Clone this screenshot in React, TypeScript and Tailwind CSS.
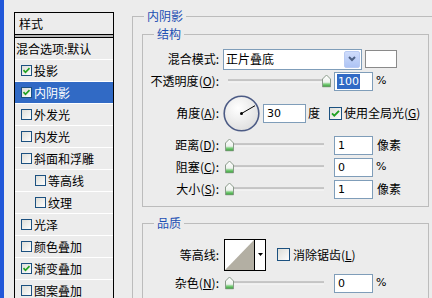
import React from "react";

const CJK = "font-[family-name:'Noto_Sans_CJK_SC','Noto_Sans',sans-serif]";

function SmallCheck({ checked }: { checked?: boolean }) {
  return (
    <svg width="11" height="11" viewBox="0 0 11 11" className="shrink-0 block">
      <defs>
        <linearGradient id="cbs" x1="0" y1="0" x2="1" y2="1">
          <stop offset="0" stopColor="#dcdcd6" />
          <stop offset="1" stopColor="#ffffff" />
        </linearGradient>
      </defs>
      <rect x="0.5" y="0.5" width="10" height="10" fill="url(#cbs)" stroke="#1c5180" />
      {checked && <path d="M2.5 5.2 L4.5 7.3 L8.5 3.2" stroke="#21a121" strokeWidth="1.7" fill="none" />}
    </svg>
  );
}

function BigCheck({ checked }: { checked?: boolean }) {
  return (
    <svg width="13" height="13" viewBox="0 0 13 13" className="shrink-0 block">
      <defs>
        <linearGradient id="cbb" x1="0" y1="0" x2="1" y2="1">
          <stop offset="0" stopColor="#dcdcd6" />
          <stop offset="1" stopColor="#ffffff" />
        </linearGradient>
      </defs>
      <rect x="0.5" y="0.5" width="12" height="12" fill="url(#cbb)" stroke="#1c5180" />
      {checked && <path d="M3 6.3 L5.3 8.6 L10 3.8" stroke="#21a121" strokeWidth="1.9" fill="none" />}
    </svg>
  );
}

type Item = { label: string; checked?: boolean; selected?: boolean; indent?: boolean; noCb?: boolean };
const items: Item[] = [
  { label: "混合选项:默认", noCb: true },
  { label: "投影", checked: true },
  { label: "内阴影", checked: true, selected: true },
  { label: "外发光" },
  { label: "内发光" },
  { label: "斜面和浮雕" },
  { label: "等高线", indent: true },
  { label: "纹理", indent: true },
  { label: "光泽" },
  { label: "颜色叠加" },
  { label: "渐变叠加", checked: true },
  { label: "图案叠加" },
];

function StyleList() {
  return (
    <div className="ml-[10px] mt-[12px] w-[100px] h-[300px] border-l border-r border-t border-black flex flex-col shrink-0">
      <div className="h-[21px] pl-[4px] flex items-center leading-[16px]">样式</div>
      <div className="h-[4px] border-t border-b border-black bg-[#b4b4b4]" />
      {items.map((it) => (
        <div
          key={it.label}
          className={
            "h-[22px] flex items-center border-b border-white leading-[16px] " +
            (it.selected ? "bg-[#316ac5] text-white " : "") +
            (it.noCb ? "pl-[1px]" : it.indent ? "pl-[20px]" : "pl-[6px]")
          }
        >
          {!it.noCb && <SmallCheck checked={it.checked} />}
          <span className={it.noCb ? "" : "ml-[2px]"}>{it.label}</span>
        </div>
      ))}
    </div>
  );
}

function Thumb() {
  return (
    <svg width="9" height="13" viewBox="0 0 9 13" className="block">
      <defs>
        <linearGradient id="thg" x1="0" y1="0" x2="0" y2="1">
          <stop offset="0" stopColor="#ffffff" />
          <stop offset="0.6" stopColor="#eef2ee" />
          <stop offset="0.75" stopColor="#7fcf7f" />
          <stop offset="1" stopColor="#2f9a2f" />
        </linearGradient>
      </defs>
      <path d="M4.5 0.5 L8.5 4.5 V12.5 H0.5 V4.5 Z" fill="url(#thg)" stroke="#8a9a8a" />
    </svg>
  );
}

function Slider({ pos }: { pos: number }) {
  return (
    <div className="relative w-[108px] h-full shrink-0">
      <div className="absolute left-[5px] right-[7px] top-1/2 -translate-y-1/2 h-[3px] border-t border-[#a9a9a9] border-b border-b-white bg-[#dedede]" />
      <div className="absolute top-1/2 -translate-y-1/2" style={{ left: pos }}>
        <Thumb />
      </div>
    </div>
  );
}

function NumBox({ value, w, selected }: { value: string; w: string; selected?: boolean }) {
  return (
    <div className={"h-[19px] border border-[#7f9db9] bg-white flex items-center pl-[2px] shrink-0 font-[family-name:'DejaVu_Sans',sans-serif] text-[11px] leading-[15px] " + w}>
      {selected ? <span className="bg-[#316ac5] text-white px-[1px]">{value}</span> : <span className="pl-[1px]">{value}</span>}
    </div>
  );
}

function Label({ children }: { children: React.ReactNode }) {
  return <div className="w-[76px] text-right shrink-0 leading-[16px] whitespace-nowrap">{children}</div>;
}

function Mn({ c }: { c: string }) {
  return (
    <span>
      (<u>{c}</u>):
    </span>
  );
}

function Dial() {
  return (
    <svg width="37" height="37" viewBox="0 0 37 37" className="block shrink-0">
      <defs>
        <radialGradient id="dg" cx="0.4" cy="0.35" r="0.7">
          <stop offset="0" stopColor="#ffffff" />
          <stop offset="1" stopColor="#dedede" />
        </radialGradient>
      </defs>
      <circle cx="18.5" cy="18.5" r="17.3" fill="url(#dg)" stroke="#4c5b85" strokeWidth="1.6" />
      <line x1="18.5" y1="18.5" x2="32" y2="10.7" stroke="#000" strokeWidth="1" />
      <circle cx="18.5" cy="18.5" r="1.5" fill="#000" />
    </svg>
  );
}

function GroupTitle({ children }: { children: React.ReactNode }) {
  return (
    <div className="absolute left-[11px] top-[-9px] px-[3px] bg-[#ececec] text-[#1d4fb3] leading-[16px]">{children}</div>
  );
}

export default function App() {
  return (
    <div className={"w-[432px] h-[298px] overflow-hidden bg-[#ececec] flex text-[12px] text-black " + CJK}>
      <div className="w-[4px] h-full bg-[#2157d9] shrink-0" />
      <StyleList />
      <div className="flex-1 pl-[18px] pt-[16px]">
        <div className="relative w-[320px] h-[300px] border-l border-t border-[#bcbcbc] pl-[9px] pt-[17px]">
          <GroupTitle>内阴影</GroupTitle>
          {/* 结构 */}
          <div className="relative w-[287px] h-[173px] border border-[#bcbcbc] pt-[13px]">
            <GroupTitle>结构</GroupTitle>
            <div className="h-[22px] flex items-center">
              <Label>混合模式:</Label>
              <div className="ml-[4px] w-[139px] h-[21px] border border-[#7f9db9] bg-white flex items-center shrink-0">
                <span className="pl-[2px] leading-[16px]">正片叠底</span>
                <div className="ml-auto mr-[1px] w-[16px] h-[17px] rounded-[2px] bg-gradient-to-b from-[#cfdcfb] to-[#aec4f4] border border-[#b9cbf3] flex items-center justify-center">
                  <svg width="8" height="6" viewBox="0 0 8 6" className="block">
                    <path d="M1 1 L4 4 L7 1" stroke="#4d6185" strokeWidth="2" fill="none" />
                  </svg>
                </div>
              </div>
              <div className="ml-[3px] w-[32px] h-[18px] border border-[#8a8a8a] bg-white shrink-0" />
            </div>
            <div className="h-[22px] flex items-center">
              <Label>
                不透明度<Mn c="O" />
              </Label>
              <div className="ml-[4px] h-full flex items-center">
                <Slider pos={99} />
                <div className="ml-[3px]">
                  <NumBox value="100" w="w-[39px]" selected />
                </div>
                <span className="ml-[3px] font-[family-name:'DejaVu_Sans',sans-serif] text-[11px]">%</span>
              </div>
            </div>
            <div className="h-[42px] flex items-center">
              <Label>
                角度<Mn c="A" />
              </Label>
              <div className="ml-[4px]">
                <Dial />
              </div>
              <div className="ml-[3px]">
                <NumBox value="30" w="w-[43px]" />
              </div>
              <span className="ml-[2px] leading-[16px]">度</span>
              <div className="ml-[9px]">
                <BigCheck checked />
              </div>
              <span className="ml-[2px] leading-[16px] whitespace-nowrap">
                使用全局光(<u>G</u>)
              </span>
            </div>
            {[
              { l: "距离", m: "D", v: "1", u: "像素" },
              { l: "阻塞", m: "C", v: "0", u: "%" },
              { l: "大小", m: "S", v: "1", u: "像素" },
            ].map((r) => (
              <div key={r.l} className="h-[22px] flex items-center">
                <Label>
                  {r.l}
                  <Mn c={r.m} />
                </Label>
                <div className="ml-[4px] h-full flex items-center">
                  <Slider pos={2} />
                  <div className="ml-[3px]">
                    <NumBox value={r.v} w="w-[39px]" />
                  </div>
                  {r.u === "%" ? (
                    <span className="ml-[3px] font-[family-name:'DejaVu_Sans',sans-serif] text-[11px]">%</span>
                  ) : (
                    <span className="ml-[4px] leading-[16px]">{r.u}</span>
                  )}
                </div>
              </div>
            ))}
          </div>
          {/* 品质 */}
          <div className="relative mt-[16px] w-[287px] h-[100px] border-l border-t border-r border-[#bcbcbc] pt-[13px]">
            <GroupTitle>品质</GroupTitle>
            <div className="h-[35px] flex items-center">
              <Label>等高线:</Label>
              <div className="ml-[5px] w-[42px] h-[32px] border border-black bg-white flex shrink-0">
                <svg width="29" height="30" viewBox="0 0 29 30" className="block">
                  <polygon points="0,30 29,0 29,30" fill="#b3afa3" />
                </svg>
                <div className="w-[11px] h-full border-l border-black flex items-center justify-center">
                  <svg width="5" height="3" viewBox="0 0 5 3" className="block">
                    <polygon points="0,0 5,0 2.5,3" fill="#000" />
                  </svg>
                </div>
              </div>
              <div className="ml-[11px]">
                <BigCheck />
              </div>
              <span className="ml-[3px] leading-[16px] whitespace-nowrap">
                消除锯齿(<u>L</u>)
              </span>
            </div>
            <div className="h-[22px] flex items-center">
              <Label>
                杂色<Mn c="N" />
              </Label>
              <div className="ml-[4px] h-full flex items-center">
                <Slider pos={2} />
                <div className="ml-[3px]">
                  <NumBox value="0" w="w-[39px]" />
                </div>
                <span className="ml-[3px] font-[family-name:'DejaVu_Sans',sans-serif] text-[11px]">%</span>
              </div>
            </div>
          </div>
        </div>
      </div>
    </div>
  );
}
